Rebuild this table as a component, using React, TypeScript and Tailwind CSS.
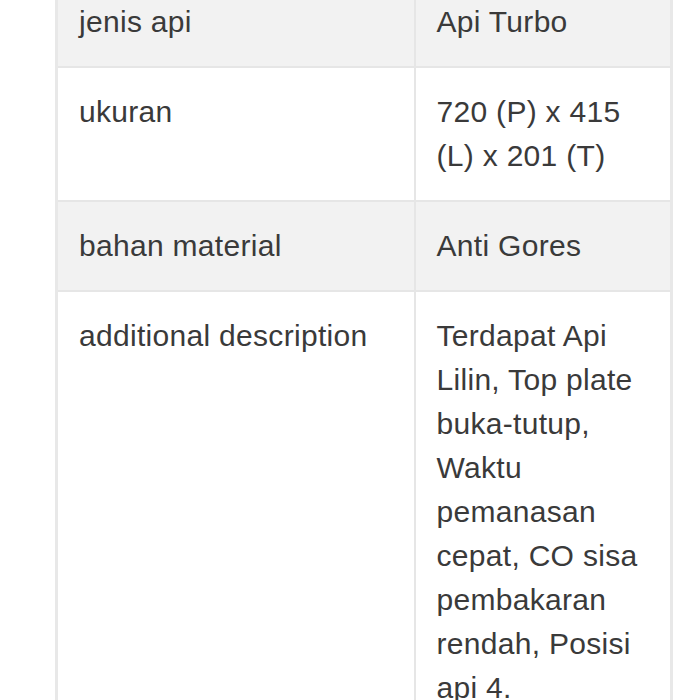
import React from 'react'

const rows = [
  { label: 'jenis api', value: 'Api Turbo' },
  { label: 'ukuran', value: '720 (P) x 415 (L) x 201 (T)' },
  { label: 'bahan material', value: 'Anti Gores' },
  {
    label: 'additional description',
    value:
      'Terdapat Api Lilin, Top plate buka-tutup, Waktu pemanasan cepat, CO sisa pembakaran rendah, Posisi api 4.',
  },
]

const App = () => {
  return (
    <div className="w-[700px] h-[700px] overflow-hidden bg-white font-['Liberation_Sans',Arial,sans-serif]">
      <div className="pl-[55px] -mt-[24px]">
        <table className="w-[615px] table-fixed border-collapse border-x-[3px] border-[#e8e8e8] text-[30px] leading-[44px] tracking-[0.01em] text-[#3a3a3a]">
          <colgroup>
            <col className="w-[358px]" />
            <col className="w-[257px]" />
          </colgroup>
          <tbody>
            {rows.map((row, i) => (
              <tr key={row.label} className={i % 2 === 0 ? 'bg-[#f2f2f2]' : 'bg-white'}>
                <td className="align-top border-2 border-[#e6e6e6] px-[21px] py-[22px]">{row.label}</td>
                <td className="align-top border-2 border-[#e6e6e6] px-[21px] py-[22px]">{row.value}</td>
              </tr>
            ))}
          </tbody>
        </table>
      </div>
    </div>
  )
}

export default App
